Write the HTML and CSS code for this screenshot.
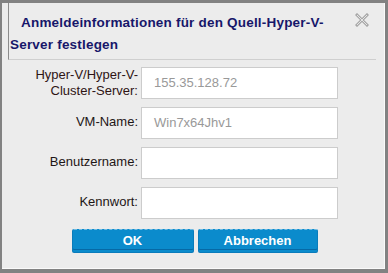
FILE: index.html
```html
<!DOCTYPE html>
<html>
<head>
<meta charset="utf-8">
<link rel="stylesheet" href="styles.css">
</head>
<body>
<div class="dialog">
  <div class="header">
    <div class="title">Anmeldeinformationen für den Quell-Hyper-V-Server festlegen</div>
    <svg class="close" width="14" height="14" viewBox="0 0 14 14">
      <path d="M2 2 L12 12 M12 2 L2 12" stroke="#a8a8a8" stroke-width="3" stroke-linecap="square"/>
      <path d="M2 2 L12 12 M12 2 L2 12" stroke="#e4e4e4" stroke-width="1"/>
    </svg>
  </div>
  <div class="form">
    <label class="lbl lbl-first">Hyper-V/Hyper-V-<br>Cluster-Server:</label>
    <div class="field muted">155.35.128.72</div>
    <label class="lbl">VM-Name:</label>
    <div class="field muted">Win7x64Jhv1</div>
    <label class="lbl">Benutzername:</label>
    <div class="field"></div>
    <label class="lbl">Kennwort:</label>
    <div class="field"></div>
  </div>
  <div class="buttons">
    <button class="btn btn-ok">OK</button>
    <button class="btn btn-cancel">Abbrechen</button>
  </div>
</div>
</body>
</html>
```
FILE: styles.css
```css
html, body {
  margin: 0;
  padding: 0;
}
body {
  background: #828282;
  width: 388px;
  height: 273px;
  overflow: hidden;
  font-family: "Liberation Sans", Arial, sans-serif;
}
.dialog {
  box-sizing: border-box;
  margin: 3px 0 0 2px;
  width: 383px;
  height: 266px;
  background: #ececec;
  border-right: 1px solid #fafafa;
  border-bottom: 1px solid #fafafa;
  display: flex;
  flex-direction: column;
}
.header {
  position: relative;
  margin-left: 6px;
  margin-right: 8px;
  height: 57px;
  box-sizing: border-box;
  border-left: 1px solid #8c8c8c;
  border-bottom: 1px solid #cfcfcf;
  padding: 9px 30px 0 1px;
}
.title {
  font-weight: bold;
  font-size: 13.5px;
  line-height: 22px;
  color: #17176a;
  text-indent: 11px;
  letter-spacing: 0.2px;
}
.close {
  position: absolute;
  right: 7px;
  top: 10px;
}
.form {
  display: grid;
  grid-template-columns: 136px 197px;
  column-gap: 3px;
  row-gap: 8px;
  margin-top: 7px;
}
.lbl {
  justify-self: end;
  align-self: center;
  text-align: right;
  font-size: 13px;
  line-height: 16px;
  color: #1e1616;
  padding-bottom: 3px;
}
.lbl-first {
  color: #2e1414;
  padding-bottom: 0;
}
.field {
  box-sizing: border-box;
  height: 32px;
  background: #ffffff;
  border: 1px solid #cccccc;
  font-size: 13px;
  line-height: 30px;
  padding-left: 12px;
  color: #999999;
}
.buttons {
  display: flex;
  justify-content: center;
  gap: 4px;
  margin-top: 10px;
  padding-left: 3px;
}
.btn {
  box-sizing: border-box;
  height: 24px;
  background: #0b8bcc;
  border: 1px solid #0a7cbb;
  border-top: 1px dashed #6fbbe3;
  border-radius: 2px;
  box-shadow: inset 0 -2px 0 #0b8bcc, inset 0 -3px 0 #0669a6;
  color: #ffffff;
  font-family: "Liberation Sans", Arial, sans-serif;
  font-weight: bold;
  font-size: 13px;
  padding: 0 0 2px 0;
}
.btn-ok {
  width: 122px;
}
.btn-cancel {
  width: 120px;
}
```
